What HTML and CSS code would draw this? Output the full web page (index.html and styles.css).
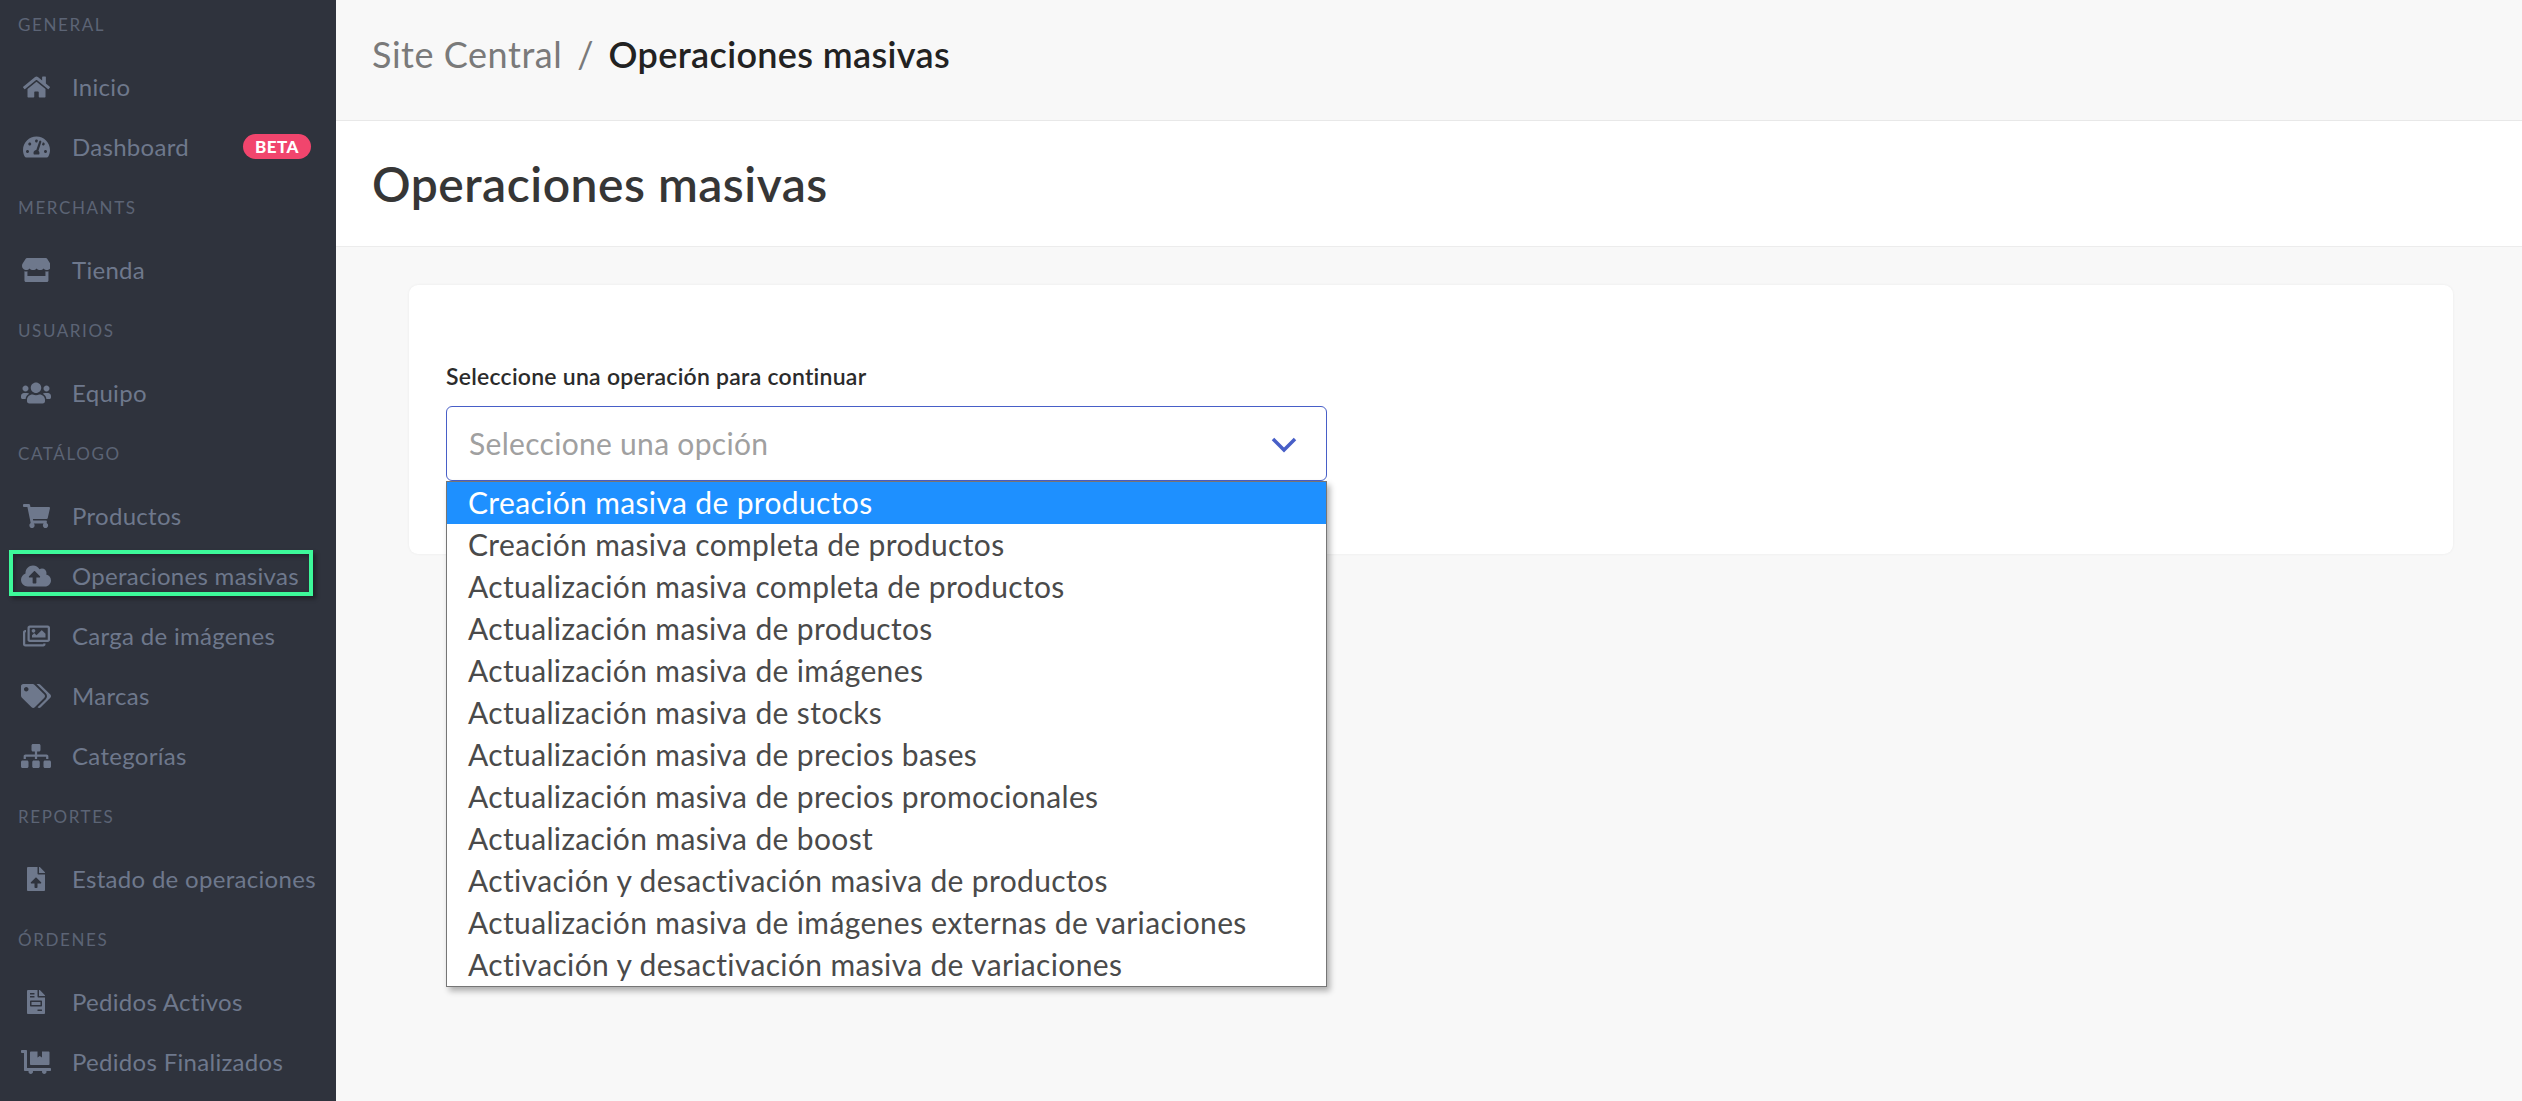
FILE: index.html
```html
<!DOCTYPE html>
<html lang="en">
  <head>
    <title>Operaciones masivas</title>
    <link rel="stylesheet" href="styles.css">
  </head>
  <body>
    <aside class="sidebar">
      <nav class="sidebar-inner">
        <div class="nav-label">General</div>
        <a class="nav-item">
          <span class="nav-icon"><svg viewBox="0 0 576 512"><path d="M280.37 148.26L96 300.11V464a16 16 0 0 0 16 16l112.06-.29a16 16 0 0 0 15.92-16V368a16 16 0 0 1 16-16h64a16 16 0 0 1 16 16v95.64a16 16 0 0 0 16 16.05L464 480a16 16 0 0 0 16-16V300L295.67 148.26a12.19 12.19 0 0 0-15.3 0zM571.6 251.47L488 182.56V44.05a12 12 0 0 0-12-12h-56a12 12 0 0 0-12 12v72.61L318.47 43a48 48 0 0 0-61 0L4.34 251.47a12 12 0 0 0-1.6 16.9l25.5 31A12 12 0 0 0 45.15 301l235.22-193.74a12.19 12.19 0 0 1 15.3 0L530.9 301a12 12 0 0 0 16.9-1.6l25.5-31a12 12 0 0 0-1.7-16.93z"/></svg></span>
          Inicio
        </a>
        <a class="nav-item">
          <span class="nav-icon"><svg viewBox="0 0 576 512"><path d="M288 32C128.94 32 0 160.94 0 320c0 52.8 14.25 102.26 39.06 144.8 5.61 9.62 16.3 15.2 27.44 15.2h443c11.14 0 21.83-5.58 27.44-15.2C561.75 422.26 576 372.8 576 320c0-159.06-128.94-288-288-288zm0 64c14.71 0 26.58 10.13 30.32 23.65-1.11 2.26-2.64 4.23-3.45 6.67l-9.22 27.67c-5.13 3.49-10.97 6.01-17.64 6.01-17.67 0-32-14.33-32-32S270.33 96 288 96zM96 384c-17.67 0-32-14.33-32-32s14.33-32 32-32 32 14.33 32 32-14.33 32-32 32zm48-160c-17.67 0-32-14.33-32-32s14.33-32 32-32 32 14.33 32 32-14.33 32-32 32zm246.77-72.41l-61.33 184C343.13 347.33 352 364.54 352 384c0 11.72-3.38 22.55-8.88 32H232.88c-5.5-9.45-8.88-20.28-8.88-32 0-33.94 26.5-61.43 59.9-63.59l61.34-184.01c4.17-12.56 17.73-19.45 30.36-15.17 12.57 4.19 19.35 17.79 15.17 30.36zm14.66 57.2l15.52-46.55c3.47-1.29 7.13-2.23 11.05-2.23 17.67 0 32 14.33 32 32s-14.33 32-32 32c-11.38-.01-20.89-6.28-26.57-15.22zM480 384c-17.67 0-32-14.33-32-32s14.33-32 32-32 32 14.33 32 32-14.33 32-32 32z"/></svg></span>
          Dashboard
          <span class="badge">BETA</span>
        </a>
        <div class="nav-label">Merchants</div>
        <a class="nav-item">
          <span class="nav-icon"><svg viewBox="0 0 616 512"><path d="M602 118.6L537.1 15C531.3 5.7 521 0 510 0H106C95 0 84.7 5.7 78.9 15L14 118.6c-33.9 54.1-3.8 129.3 59.6 138 4.6.6 9.2.9 13.7.9 29.9 0 56.4-13.1 74.6-33.4 18.2 20.2 44.8 33.4 74.6 33.4 29.9 0 56.4-13.1 74.6-33.4 18.2 20.2 44.8 33.4 74.6 33.4 29.9 0 56.4-13.1 74.6-33.4 18.3 20.2 44.8 33.4 74.6 33.4 4.6 0 9.1-.3 13.7-.9 63.6-8.6 93.8-83.8 59.8-137.9zM529.5 288c-10 0-19.9-1.5-29.5-3.8V384H116v-99.8c-9.6 2.2-19.5 3.8-29.5 3.8-6 0-12.1-.4-18-1.2-5.6-.8-11.1-2.1-16.4-3.6V480c0 17.7 14.3 32 32 32h448c17.7 0 32-14.3 32-32V283.2c-5.4 1.6-10.8 2.9-16.4 3.6-6.1.8-12.1 1.2-18.2 1.2z"/></svg></span>
          Tienda
        </a>
        <div class="nav-label">Usuarios</div>
        <a class="nav-item">
          <span class="nav-icon"><svg viewBox="0 0 640 512"><path d="M96 224c35.3 0 64-28.7 64-64s-28.7-64-64-64-64 28.7-64 64 28.7 64 64 64zm448 0c35.3 0 64-28.7 64-64s-28.7-64-64-64-64 28.7-64 64 28.7 64 64 64zm32 32h-64c-17.6 0-33.5 7.1-45.1 18.6 40.3 22.1 68.9 62 75.1 109.4h66c17.7 0 32-14.3 32-32v-32c0-35.3-28.7-64-64-64zm-256 0c61.9 0 112-50.1 112-112S381.9 32 320 32 208 82.1 208 144s50.1 112 112 112zm76.8 32h-8.3c-20.8 10-43.9 16-68.5 16s-47.6-6-68.5-16h-8.3C179.6 288 128 339.6 128 403.2V432c0 26.5 21.5 48 48 48h288c26.5 0 48-21.5 48-48v-28.8c0-63.6-51.6-115.2-115.2-115.2zm-223.7-13.4C161.5 263.1 145.6 256 128 256H64c-35.3 0-64 28.7-64 64v32c0 17.7 14.3 32 32 32h65.9c6.3-47.4 34.9-87.3 75.2-109.4z"/></svg></span>
          Equipo
        </a>
        <div class="nav-label">Catálogo</div>
        <a class="nav-item">
          <span class="nav-icon"><svg viewBox="0 0 576 512"><path d="M528.12 301.319l47.273-208C578.806 78.301 567.391 64 551.99 64H159.208l-9.166-44.81C147.758 8.021 137.93 0 126.529 0H24C10.745 0 0 10.745 0 24v16c0 13.255 10.745 24 24 24h69.883l70.248 343.435C147.325 417.1 136 435.222 136 456c0 30.928 25.072 56 56 56s56-25.072 56-56c0-15.674-6.447-29.835-16.824-40h209.647C430.447 426.165 424 440.326 424 456c0 30.928 25.072 56 56 56s56-25.072 56-56c0-22.172-12.888-41.332-31.579-50.405l5.517-24.276c3.413-15.018-8.002-29.319-23.403-29.319H218.117l-6.545-32h293.145c11.206 0 20.92-7.754 23.403-18.681z"/></svg></span>
          Productos
        </a>
        <a class="nav-item highlighted">
          <span class="nav-icon"><svg viewBox="0 0 640 512"><path d="M537.6 226.6c4.1-10.7 6.4-22.4 6.4-34.6 0-53-43-96-96-96-19.7 0-38.1 6-53.3 16.2C367 64.2 315.3 32 256 32c-88.4 0-160 71.6-160 160 0 2.7.1 5.4.2 8.1C40.2 219.8 0 273.2 0 336c0 79.5 64.5 144 144 144h368c70.7 0 128-57.3 128-128 0-61.9-44-113.6-102.4-125.4zM393.4 288H328v112c0 8.8-7.2 16-16 16h-48c-8.8 0-16-7.2-16-16V288h-65.4c-14.3 0-21.4-17.2-11.3-27.3l105.4-105.4c6.2-6.2 16.4-6.2 22.6 0l105.4 105.4c10.1 10.1 2.9 27.3-11.3 27.3z"/></svg></span>
          Operaciones masivas
        </a>
        <a class="nav-item">
          <span class="nav-icon"><svg viewBox="0 0 576 512"><path d="M480 416v16c0 26.51-21.49 48-48 48H48c-26.51 0-48-21.49-48-48V176c0-26.51 21.49-48 48-48h16v48H54a6 6 0 0 0-6 6v244a6 6 0 0 0 6 6h372a6 6 0 0 0 6-6v-10h48zm42-336H150a6 6 0 0 0-6 6v244a6 6 0 0 0 6 6h372a6 6 0 0 0 6-6V86a6 6 0 0 0-6-6zm6-48c26.51 0 48 21.49 48 48v256c0 26.51-21.49 48-48 48H144c-26.51 0-48-21.49-48-48V80c0-26.51 21.49-48 48-48h384zM264 144c0 22.091-17.909 40-40 40s-40-17.909-40-40 17.909-40 40-40 40 17.909 40 40zm-72 96l39.515-39.515c4.686-4.686 12.284-4.686 16.971 0L288 240l103.515-103.515c4.686-4.686 12.284-4.686 16.971 0L480 208v80H192v-48z"/></svg></span>
          Carga de imágenes
        </a>
        <a class="nav-item">
          <span class="nav-icon"><svg viewBox="0 0 640 512"><path d="M497.941 225.941L286.059 14.059A48 48 0 0 0 252.118 0H48C21.49 0 0 21.49 0 48v204.118a48 48 0 0 0 14.059 33.941l211.882 211.882c18.744 18.745 49.136 18.746 67.882 0l204.118-204.118c18.745-18.745 18.745-49.137 0-67.882zM112 160c-26.51 0-48-21.49-48-48s21.49-48 48-48 48 21.49 48 48-21.49 48-48 48zm513.941 133.823L421.823 497.941c-18.745 18.745-49.137 18.745-67.882 0l-.36-.36L527.64 323.522c16.999-16.999 26.36-39.6 26.36-63.64s-9.362-46.641-26.36-63.64L331.397 0h48.721a48 48 0 0 1 33.941 14.059l211.882 211.882c18.745 18.745 18.745 49.137 0 67.882z"/></svg></span>
          Marcas
        </a>
        <a class="nav-item">
          <span class="nav-icon"><svg viewBox="0 0 640 512"><path d="M128 352H32c-17.67 0-32 14.33-32 32v96c0 17.67 14.33 32 32 32h96c17.67 0 32-14.33 32-32v-96c0-17.67-14.33-32-32-32zm-24-80h192v48h48v-48h192v48h48v-57.59c0-21.17-17.23-38.41-38.41-38.41H344v-64h40c17.67 0 32-14.33 32-32V32c0-17.67-14.33-32-32-32H256c-17.67 0-32 14.33-32 32v96c0 17.67 14.33 32 32 32h40v64H94.41C73.23 224 56 241.23 56 262.41V320h48v-48zm264 80h-96c-17.67 0-32 14.33-32 32v96c0 17.67 14.33 32 32 32h96c17.67 0 32-14.33 32-32v-96c0-17.67-14.33-32-32-32zm240 0h-96c-17.67 0-32 14.33-32 32v96c0 17.67 14.33 32 32 32h96c17.67 0 32-14.33 32-32v-96c0-17.67-14.33-32-32-32z"/></svg></span>
          Categorías
        </a>
        <div class="nav-label">Reportes</div>
        <a class="nav-item">
          <span class="nav-icon"><svg viewBox="0 0 384 512"><path d="M224 136V0H24C10.7 0 0 10.7 0 24v464c0 13.3 10.7 24 24 24h336c13.3 0 24-10.7 24-24V160H248c-13.2 0-24-10.8-24-24zm65.18 216.01H224v80c0 8.84-7.16 16-16 16h-32c-8.84 0-16-7.16-16-16v-80H94.82c-14.28 0-21.41-17.29-11.27-27.36l96.42-95.7c6.65-6.61 17.39-6.61 24.04 0l96.42 95.7c10.15 10.07 3.03 27.36-11.25 27.36zM377 105L279.1 7c-4.5-4.5-10.6-7-17-7H256v128h128v-6.1c0-6.3-2.5-12.4-7-16.9z"/></svg></span>
          Estado de operaciones
        </a>
        <div class="nav-label">Órdenes</div>
        <a class="nav-item">
          <span class="nav-icon"><svg viewBox="0 0 384 512"><path d="M288 256H96v64h192v-64zm89-151L279.1 7c-4.5-4.5-10.6-7-17-7H256v128h128v-6.1c0-6.3-2.5-12.4-7-16.9zm-153 31V0H24C10.7 0 0 10.7 0 24v464c0 13.3 10.7 24 24 24h336c13.3 0 24-10.7 24-24V160H248c-13.2 0-24-10.8-24-24zM64 72c0-4.42 3.58-8 8-8h80c4.42 0 8 3.58 8 8v16c0 4.42-3.58 8-8 8H72c-4.42 0-8-3.58-8-8V72zm0 64c0-4.42 3.58-8 8-8h80c4.42 0 8 3.58 8 8v16c0 4.42-3.58 8-8 8H72c-4.42 0-8-3.58-8-8v-16zm256 304c0 4.42-3.58 8-8 8h-80c-4.42 0-8-3.58-8-8v-16c0-4.42 3.58-8 8-8h80c4.42 0 8 3.58 8 8v16zm0-200v96c0 8.84-7.16 16-16 16H80c-8.84 0-16-7.16-16-16v-96c0-8.84 7.16-16 16-16h224c8.84 0 16 7.16 16 16z"/></svg></span>
          Pedidos Activos
        </a>
        <a class="nav-item">
          <span class="nav-icon"><svg viewBox="0 0 640 512"><path d="M208 320h384c8.8 0 16-7.2 16-16V48c0-8.8-7.2-16-16-16H448v128l-48-32-48 32V32H208c-8.8 0-16 7.2-16 16v256c0 8.8 7.2 16 16 16zm416 64H128V16c0-8.8-7.2-16-16-16H16C7.2 0 0 7.2 0 16v32c0 8.8 7.2 16 16 16h48v368c0 8.8 7.2 16 16 16h82.9c-1.8 5-2.9 10.4-2.9 16 0 26.5 21.5 48 48 48s48-21.5 48-48c0-5.6-1.2-11-2.9-16H451c-1.8 5-2.9 10.4-2.9 16 0 26.5 21.5 48 48 48s48-21.5 48-48c0-5.6-1.2-11-2.9-16H624c8.8 0 16-7.2 16-16v-32c0-8.8-7.2-16-16-16z"/></svg></span>
          Pedidos Finalizados
        </a>
      </nav>
    </aside>

    <main class="content">
      <div class="topbar">
        <span class="crumb">Site Central</span>
        <span class="crumb-sep">/</span>
        <span class="crumb-current">Operaciones masivas</span>
      </div>
      <div class="page-header">
        <h1>Operaciones masivas</h1>
      </div>
      <section class="card">
        <label class="field-label">Seleccione una operación para continuar</label>
        <div class="select-wrap">
          <div class="select-box">
            <span class="placeholder">Seleccione una opción</span>
            <svg class="chevron" viewBox="0 0 28 18"><path d="M3 3l11 11L25 3"/></svg>
          </div>
          <ul class="options">
            <li class="selected">Creación masiva de productos</li>
            <li>Creación masiva completa de productos</li>
            <li>Actualización masiva completa de productos</li>
            <li>Actualización masiva de productos</li>
            <li>Actualización masiva de imágenes</li>
            <li>Actualización masiva de stocks</li>
            <li>Actualización masiva de precios bases</li>
            <li>Actualización masiva de precios promocionales</li>
            <li>Actualización masiva de boost</li>
            <li>Activación y desactivación masiva de productos</li>
            <li>Actualización masiva de imágenes externas de variaciones</li>
            <li>Activación y desactivación masiva de variaciones</li>
          </ul>
        </div>
      </section>
    </main>
  </body>
</html>
```

FILE: styles.css
```css
*, *::after {
  box-sizing: border-box;
}

html, body {
  height: 100%;
}

body {
  margin: 0;
  display: flex;
  overflow: hidden;
  background-color: #f8f8f8;
  font-family: "Lato", "Noto Sans", sans-serif;
}

/* sidebar */
.sidebar {
  width: 336px;
  flex-shrink: 0;
  overflow: hidden;
  background-color: #2f333d;
}

.sidebar-inner {
  margin-top: -6px;
}

.nav-label {
  height: 63px;
  padding: 0 18px 3px;
  display: flex;
  align-items: center;
  color: #5c6475;
  font-size: 17px;
  letter-spacing: 1.6px;
  text-transform: uppercase;
}

.nav-item {
  position: relative;
  height: 60px;
  padding: 0 0 1px 21px;
  display: flex;
  align-items: center;
  color: #6e788c;
  font-size: 24px;
  letter-spacing: 0.3px;
  white-space: nowrap;
}

.nav-icon {
  width: 30px;
  margin-right: 21px;
  display: flex;
  justify-content: center;
}

.nav-icon svg {
  height: 24px;
  fill: #6e788c;
}

.badge {
  position: absolute;
  left: 243px;
  top: 17px;
  width: 68px;
  height: 25px;
  border-radius: 13px;
  background-color: #f1456d;
  color: #fff;
  font-size: 17px;
  font-weight: 900;
  line-height: 25px;
  text-align: center;
  letter-spacing: 0.5px;
}

.highlighted::after {
  content: "";
  position: absolute;
  left: 9px;
  top: 4px;
  width: 304px;
  height: 46px;
  border: 4px solid #3df99a;
  box-shadow: 3px 3px 4px rgba(0, 0, 0, 0.35), inset 2px 2px 4px rgba(0, 0, 0, 0.3);
}

/* main column */
.content {
  flex: 1;
}

.topbar {
  height: 121px;
  padding: 0 0 12px 36px;
  display: flex;
  align-items: center;
  gap: 15px;
  border-bottom: 1px solid #e8e8e8;
  font-size: 36px;
}

.crumb {
  color: #7a7a7a;
  letter-spacing: 0.55px;
}

.crumb-sep {
  color: #7a7a7a;
}

.crumb-current {
  color: #222;
  font-weight: 600;
  letter-spacing: 0.35px;
}

.page-header {
  height: 126px;
  padding-left: 36px;
  display: flex;
  align-items: center;
  background-color: #fff;
  border-bottom: 1px solid #ececec;
}

h1 {
  margin: 0;
  color: #363636;
  font-size: 48px;
  font-weight: 600;
  letter-spacing: 0.5px;
}

.card {
  height: 269px;
  margin: 38px 69px 0 73px;
  padding: 74px 37px 0;
  border-radius: 9px;
  background-color: #fff;
  box-shadow: 0 0 3px rgba(0, 0, 0, 0.06);
}

.field-label {
  display: block;
  height: 47px;
  color: #2b2b2b;
  font-size: 23px;
  font-weight: 600;
  letter-spacing: 0.25px;
  line-height: 34px;
}

.select-wrap {
  position: relative;
  width: 881px;
}

.select-box {
  height: 75px;
  padding: 0 21px 0 22px;
  display: flex;
  align-items: center;
  justify-content: space-between;
  border: 1px solid #485fc7;
  border-radius: 6px;
  background-color: #fff;
}

.placeholder {
  padding-bottom: 2px;
  color: #a0a0a0;
  font-size: 30px;
  letter-spacing: 0.3px;
}

.chevron {
  width: 28px;
  height: 18px;
  margin: 2px 7px 0 0;
  fill: none;
  stroke: #485fc7;
  stroke-width: 3.5;
}

.options {
  position: absolute;
  left: 0;
  right: 0;
  top: 75px;
  margin: 0;
  padding: 0;
  list-style: none;
  border: 1px solid #767676;
  background-color: #fff;
  box-shadow: 3px 4px 6px rgba(0, 0, 0, 0.3);
}

.options li {
  height: 42px;
  padding-left: 21px;
  color: #4a4a4a;
  font-size: 30px;
  letter-spacing: 0.36px;
  line-height: 41px;
  white-space: nowrap;
}

.options .selected {
  background-color: #1e90ff;
  color: #fff;
}
```
